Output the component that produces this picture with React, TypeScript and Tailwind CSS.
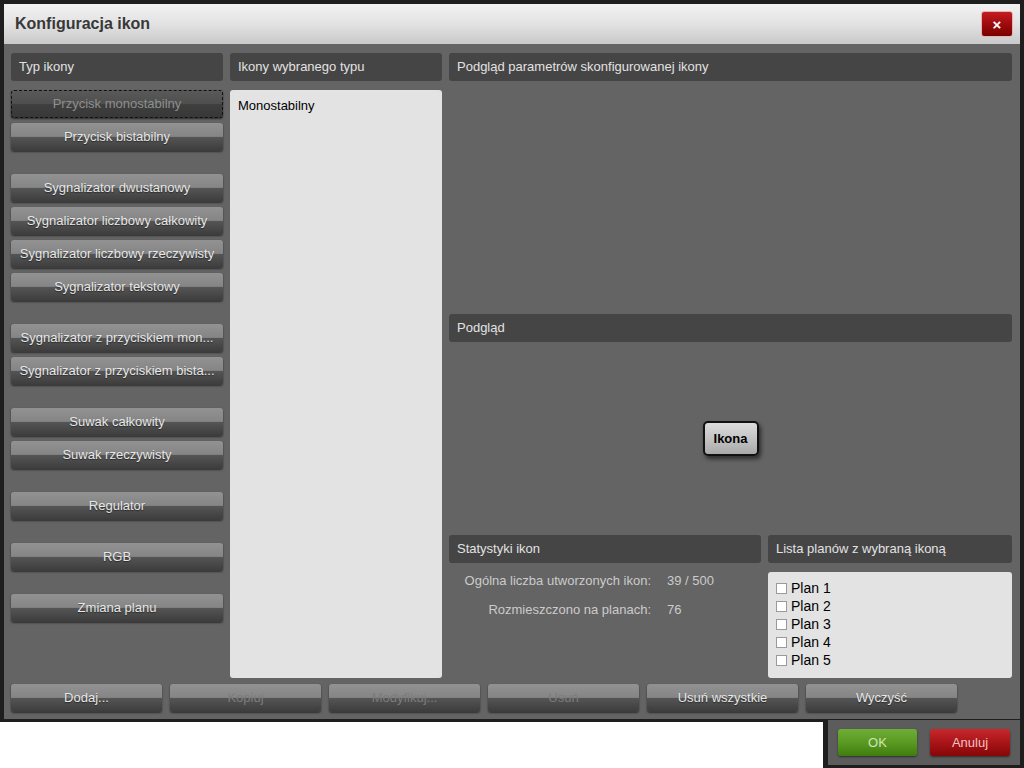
import React from "react";

const F = { fontFamily: '"Liberation Sans", Arial, sans-serif' };

function GrayBtn({
  label,
  disabled,
  focused,
  className = "",
}: {
  label: string;
  disabled?: boolean;
  focused?: boolean;
  className?: string;
}) {
  const base =
    "h-[28px] rounded-[3px] flex items-center justify-center text-[13px] whitespace-nowrap shadow-[0_1px_2px_rgba(0,0,0,0.55)]";
  if (focused) {
    return (
      <div
        className={`${base} bg-[linear-gradient(to_bottom,#5a5a5a_0%,#4e4e4e_50%,#3e3e3e_52%,#383838_100%)] text-[#8e8e8e] outline outline-1 outline-dashed outline-[#111] -outline-offset-1 ${className}`}
      >
        <span>{label}</span>
      </div>
    );
  }
  return (
    <div
      className={`${base} bg-[linear-gradient(to_bottom,#929292_0%,#858585_48%,#555555_50%,#3c3c3c_100%)] ${
        disabled ? "text-[#7c7c7c]" : "text-[#e8e8e8] [text-shadow:0_1px_1px_rgba(0,0,0,0.45)]"
      } ${className}`}
    >
      <span>{label}</span>
    </div>
  );
}

function Header({ children, className = "" }: { children: React.ReactNode; className?: string }) {
  return (
    <div
      className={`h-[28px] shrink-0 rounded-[3px] bg-[#454545] flex items-center px-[8px] text-[13px] text-[#e2e2e2] ${className}`}
    >
      {children}
    </div>
  );
}

export default function App() {
  const groups: string[][] = [
    ["Przycisk monostabilny", "Przycisk bistabilny"],
    [
      "Sygnalizator dwustanowy",
      "Sygnalizator liczbowy całkowity",
      "Sygnalizator liczbowy rzeczywisty",
      "Sygnalizator tekstowy",
    ],
    ["Sygnalizator z przyciskiem mon...", "Sygnalizator z przyciskiem bista..."],
    ["Suwak całkowity", "Suwak rzeczywisty"],
    ["Regulator"],
    ["RGB"],
    ["Zmiana planu"],
  ];

  return (
    <div className="w-[1024px] h-[768px] bg-white relative overflow-hidden" style={F}>
      {/* Window */}
      <div className="w-[1024px] h-[722px] bg-[#1e1e1e] px-[4px] pt-[4px] pb-[3px] flex flex-col">
        {/* Title bar */}
        <div className="h-[40px] shrink-0 bg-[linear-gradient(to_bottom,#f2f2f2_0%,#e2e2e2_50%,#c9c9c9_100%)] flex items-center justify-between pl-[11px] pr-[7px]">
          <span className="text-[16px] font-bold text-[#383838]">Konfiguracja ikon</span>
          <div className="w-[32px] h-[26px] rounded-[3px] border border-[#e6b4b4] bg-[linear-gradient(to_bottom,#c41c20_0%,#9a0a0c_55%,#7a0000_100%)] flex items-center justify-center">
            <span className="text-white font-bold text-[15px] leading-none">×</span>
          </div>
        </div>

        {/* Body */}
        <div className="flex-1 bg-[#646464] pt-[9px] pl-[7px] pr-[8px] pb-[7px] flex flex-col gap-[6px]">
          <div className="flex-1 flex gap-[7px] min-h-0">
            {/* Left column */}
            <div className="w-[212px] flex flex-col">
              <Header>Typ ikony</Header>
              <div className="mt-[9px] flex flex-col gap-[23px]">
                {groups.map((g, gi) => (
                  <div key={gi} className="flex flex-col gap-[5px]">
                    {g.map((l, li) => (
                      <GrayBtn key={l} label={l} focused={gi === 0 && li === 0} />
                    ))}
                  </div>
                ))}
              </div>
            </div>

            {/* Middle column */}
            <div className="w-[212px] flex flex-col">
              <Header>Ikony wybranego typu</Header>
              <div className="mt-[9px] flex-1 rounded-[3px] bg-[#e3e3e3] px-[8px] pt-[6px] text-[13px] text-black">
                Monostabilny
              </div>
            </div>

            {/* Right column */}
            <div className="flex-1 flex flex-col">
              <Header>Podgląd parametrów skonfigurowanej ikony</Header>
              <div className="h-[233px] shrink-0" />
              <Header>Podgląd</Header>
              <div className="flex-1 flex items-center justify-center">
                <div className="w-[56px] h-[35px] rounded-[5px] border-2 border-[#111] bg-[linear-gradient(to_bottom,#dcdcdc_0%,#c4c4c4_50%,#a9a9a9_100%)] shadow-[2px_3px_4px_rgba(0,0,0,0.55)] flex items-center justify-center text-[13px] font-bold text-black">
                  Ikona
                </div>
              </div>
              <div className="h-[143px] shrink-0 flex gap-[7px]">
                <div className="w-[312px] flex flex-col">
                  <Header>Statystyki ikon</Header>
                  <div className="mt-[8px] grid grid-cols-[202px_auto] gap-x-[16px] gap-y-[9px] text-[13px] leading-[20px] text-[#cbcbcb]">
                    <span className="text-right">Ogólna liczba utworzonych ikon:</span>
                    <span>39 / 500</span>
                    <span className="text-right">Rozmieszczono na planach:</span>
                    <span>76</span>
                  </div>
                </div>
                <div className="flex-1 flex flex-col">
                  <Header>Lista planów z wybraną ikoną</Header>
                  <div className="mt-[9px] flex-1 rounded-[3px] bg-[#e3e3e3] pl-[8px] pt-[7px] flex flex-col">
                    {[1, 2, 3, 4, 5].map((n) => (
                      <div key={n} className="h-[18px] flex items-center gap-[4px] text-[14px] text-black">
                        <span className="w-[11px] h-[11px] bg-white border border-[#9a9a9a] inline-block" />
                        <span>Plan {n}</span>
                      </div>
                    ))}
                  </div>
                </div>
              </div>
            </div>
          </div>

          {/* Bottom buttons */}
          <div className="h-[28px] shrink-0 flex gap-[8px]">
            <GrayBtn label="Dodaj..." className="w-[151px]" />
            <GrayBtn label="Kopiuj" disabled className="w-[151px]" />
            <GrayBtn label="Modyfikuj..." disabled className="w-[151px]" />
            <GrayBtn label="Usuń" disabled className="w-[151px]" />
            <GrayBtn label="Usuń wszystkie" className="w-[151px]" />
            <GrayBtn label="Wyczyść" className="w-[151px]" />
          </div>
        </div>
      </div>

      {/* OK / Anuluj panel */}
      <div className="absolute left-[823px] top-[720px] w-[201px] h-[48px] bg-[#1e1e1e] pl-[5px] pr-[4px] pb-[3px]">
        <div className="w-full h-full bg-[#5c5c5c] flex items-center pl-[10px] gap-[13px]">
          <div className="w-[79px] h-[27px] rounded-[3px] bg-[linear-gradient(to_bottom,#6fae36_0%,#5a9a22_50%,#3f7c0e_100%)] shadow-[0_1px_2px_rgba(0,0,0,0.5)] flex items-center justify-center text-[13px] text-[#cfe6b8]">
            OK
          </div>
          <div className="w-[80px] h-[27px] rounded-[3px] bg-[linear-gradient(to_bottom,#c8282c_0%,#a81518_50%,#860606_100%)] shadow-[0_1px_2px_rgba(0,0,0,0.5)] flex items-center justify-center text-[13px] text-[#f2c4c4]">
            Anuluj
          </div>
        </div>
      </div>
    </div>
  );
}
